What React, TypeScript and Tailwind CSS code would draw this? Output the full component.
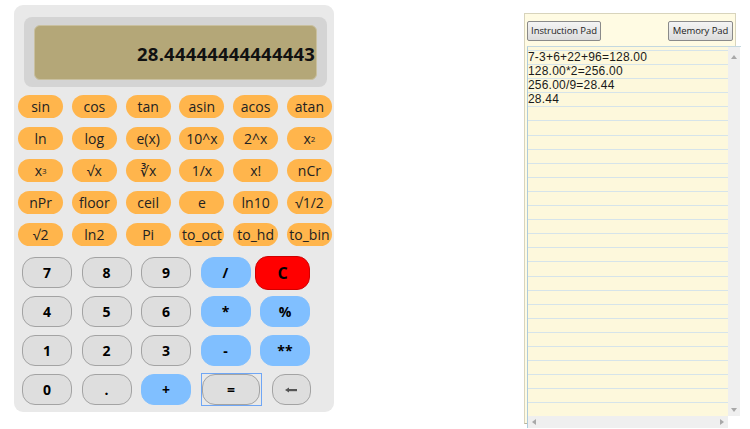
import React from "react";

const F = { fontFamily: '"Open Sans", "Noto Sans", sans-serif' };
const LS = { fontFamily: '"Liberation Sans", Arial, sans-serif' };

function Orange({ children }: { children: React.ReactNode }) {
  return (
    <div className="h-[23px] rounded-full bg-[#ffb54c] flex items-center justify-center text-[14px] text-[#222] leading-none">
      {children}
    </div>
  );
}

function Key({
  children,
  kind = "gray",
  className = "",
}: {
  children: React.ReactNode;
  kind?: "gray" | "blue" | "red";
  className?: string;
}) {
  const base =
    kind === "gray"
      ? "bg-[#dedede] border border-[#a3a3a3]"
      : kind === "blue"
      ? "bg-[#80bfff] border border-[#80bfff]"
      : "bg-[#ff0000] border border-[#d00000]";
  return (
    <div
      className={`${base} rounded-[13px] flex items-center justify-center text-[14px] font-bold text-black leading-none ${className}`}
    >
      {children}
    </div>
  );
}

const sup = (b: string, s: string) => (
  <span>
    {b}
    <sup className="text-[8px] relative -top-[2px]">{s}</sup>
  </span>
);

export default function App() {
  const orange: React.ReactNode[] = [
    "sin", "cos", "tan", "asin", "acos", "atan",
    "ln", "log", "e(x)", "10^x", "2^x", sup("x", "2"),
    sup("x", "3"), "√x", "∛x", "1/x", "x!", "nCr",
    "nPr", "floor", "ceil", "e", "ln10", "√1/2",
    "√2", "ln2", "Pi", "to_oct", "to_hd", "to_bin",
  ];
  const lines = [
    "7-3+6+22+96=128.00",
    "128.00*2=256.00",
    "256.00/9=28.44",
    "28.44",
  ];
  const rows = Array.from({ length: 26 }, (_, i) => lines[i] ?? "");
  return (
    <div className="w-[750px] h-[429px] bg-white flex overflow-hidden" style={F}>
      {/* Calculator */}
      <div className="ml-[14px] mt-[5px] w-[320px] h-[407px] bg-[#e9e9e9] rounded-[9px] pt-[12px] flex flex-col">
        <div className="ml-[10px] w-[303px] h-[70px] bg-[#d4d4d4] rounded-[8px] pt-[8px] pl-[10px]">
          <div className="w-[283px] h-[55px] bg-[#b4a778] border border-[#c9c0a0] rounded-[6px] flex items-center justify-end pr-[1px] pt-[2px]">
            <span className="text-[18.5px] font-bold text-[#111] tracking-[0.2px]">28.44444444444443</span>
          </div>
        </div>
        <div className="mt-[8px] ml-[4px] w-[314px] grid grid-cols-6 gap-x-[8.6px] gap-y-[9px]">
          {orange.map((o, i) => (
            <Orange key={i}>{o}</Orange>
          ))}
        </div>
        <div className="mt-[11px] ml-[8px] flex flex-col gap-[8px]">
          <div className="h-[31px] flex items-center gap-[9.5px]">
            <Key className="w-[50px] h-[31px]">7</Key>
            <Key className="w-[50px] h-[31px]">8</Key>
            <Key className="w-[50px] h-[31px]">9</Key>
            <Key kind="blue" className="w-[50px] h-[31px]">/</Key>
            <Key kind="red" className="w-[55px] h-[34px] -ml-[5px] rounded-[11px] text-[16px]">C</Key>
          </div>
          <div className="h-[31px] flex items-center gap-[9.5px]">
            <Key className="w-[50px] h-[31px]">4</Key>
            <Key className="w-[50px] h-[31px]">5</Key>
            <Key className="w-[50px] h-[31px]">6</Key>
            <Key kind="blue" className="w-[50px] h-[31px]">*</Key>
            <Key kind="blue" className="w-[50px] h-[31px]">%</Key>
          </div>
          <div className="h-[31px] flex items-center gap-[9.5px]">
            <Key className="w-[50px] h-[31px]">1</Key>
            <Key className="w-[50px] h-[31px]">2</Key>
            <Key className="w-[50px] h-[31px]">3</Key>
            <Key kind="blue" className="w-[50px] h-[31px]">-</Key>
            <Key kind="blue" className="w-[50px] h-[31px]">**</Key>
          </div>
          <div className="h-[31px] flex items-center gap-[9.5px]">
            <Key className="w-[50px] h-[31px]">0</Key>
            <Key className="w-[50px] h-[31px]">.</Key>
            <Key kind="blue" className="w-[50px] h-[31px]">+</Key>
            <div className="w-[61px] h-[33px] border border-[#6fa6f5] flex items-center justify-center">
              <Key className="w-[58px] h-[31px]">=</Key>
            </div>
            <Key className="w-[39px] h-[31px] ml-[0.7px]">
              <svg width="12" height="6" viewBox="0 0 12 6">
                <path d="M0 3 L4 0.5 L4 5.5Z" fill="#555" />
                <rect x="3.5" y="2" width="8.5" height="2.2" fill="#555" />
              </svg>
            </Key>
          </div>
        </div>
      </div>

      {/* Right panel */}
      <div className="ml-[190px] mt-[13px] w-[212px] h-[411px] bg-[#fffbe3] border-l border-t border-r border-[#d8d4bc] border-b border-b-[#b8b4a0] flex flex-col relative">
        <div className="mt-[7px] px-[2px] flex justify-between">
          <div className="w-[74px] h-[20px] border border-[#8a8a8a] rounded-[2px] bg-[linear-gradient(#f4f4f4,#dcdcdc)] flex items-center justify-center text-[9.5px] tracking-[-0.1px] text-[#222] whitespace-nowrap">
            Instruction Pad
          </div>
          <div className="w-[65px] h-[20px] border border-[#8a8a8a] rounded-[2px] bg-[linear-gradient(#f4f4f4,#dcdcdc)] flex items-center justify-center text-[9.5px] tracking-[-0.1px] text-[#222] whitespace-nowrap">
            Memory Pad
          </div>
        </div>
        <div className="mt-[5px] ml-[2px] w-[214px] flex-1 border-t border-[#c4d8e0] border-l border-l-[#aecbdc] flex flex-col">
          <div className="flex flex-1 min-h-0">
            <div className="w-[200px] bg-[#fdf8dc] pt-[3px] overflow-hidden" style={LS}>
              {rows.map((t, i) => (
                <div
                  key={i}
                  className="h-[14.1px] border-t border-[#d6e4ea] text-[12px] leading-[13px] tracking-[0.2px] text-[#1a1a1a] whitespace-nowrap"
                >
                  {t}
                </div>
              ))}
            </div>
            <div className="w-[12px] bg-[#efefef] flex flex-col justify-between items-center pt-[8px] pb-[4px]">
              <svg width="6" height="4" viewBox="0 0 6 4"><path d="M0 4 L3 0 L6 4Z" fill="#a8a8a8" /></svg>
              <svg width="6" height="4" viewBox="0 0 6 4"><path d="M0 0 L3 4 L6 0Z" fill="#a8a8a8" /></svg>
            </div>
          </div>
          <div className="h-[12px] flex">
            <div className="w-[200px] bg-[#efefef] flex items-center justify-between px-[4px]">
              <svg width="4" height="6" viewBox="0 0 4 6"><path d="M4 0 L0 3 L4 6Z" fill="#a8a8a8" /></svg>
              <svg width="4" height="6" viewBox="0 0 4 6"><path d="M0 0 L4 3 L0 6Z" fill="#a8a8a8" /></svg>
            </div>
            <div className="w-[12px] bg-white" />
          </div>
        </div>
      </div>
    </div>
  );
}
